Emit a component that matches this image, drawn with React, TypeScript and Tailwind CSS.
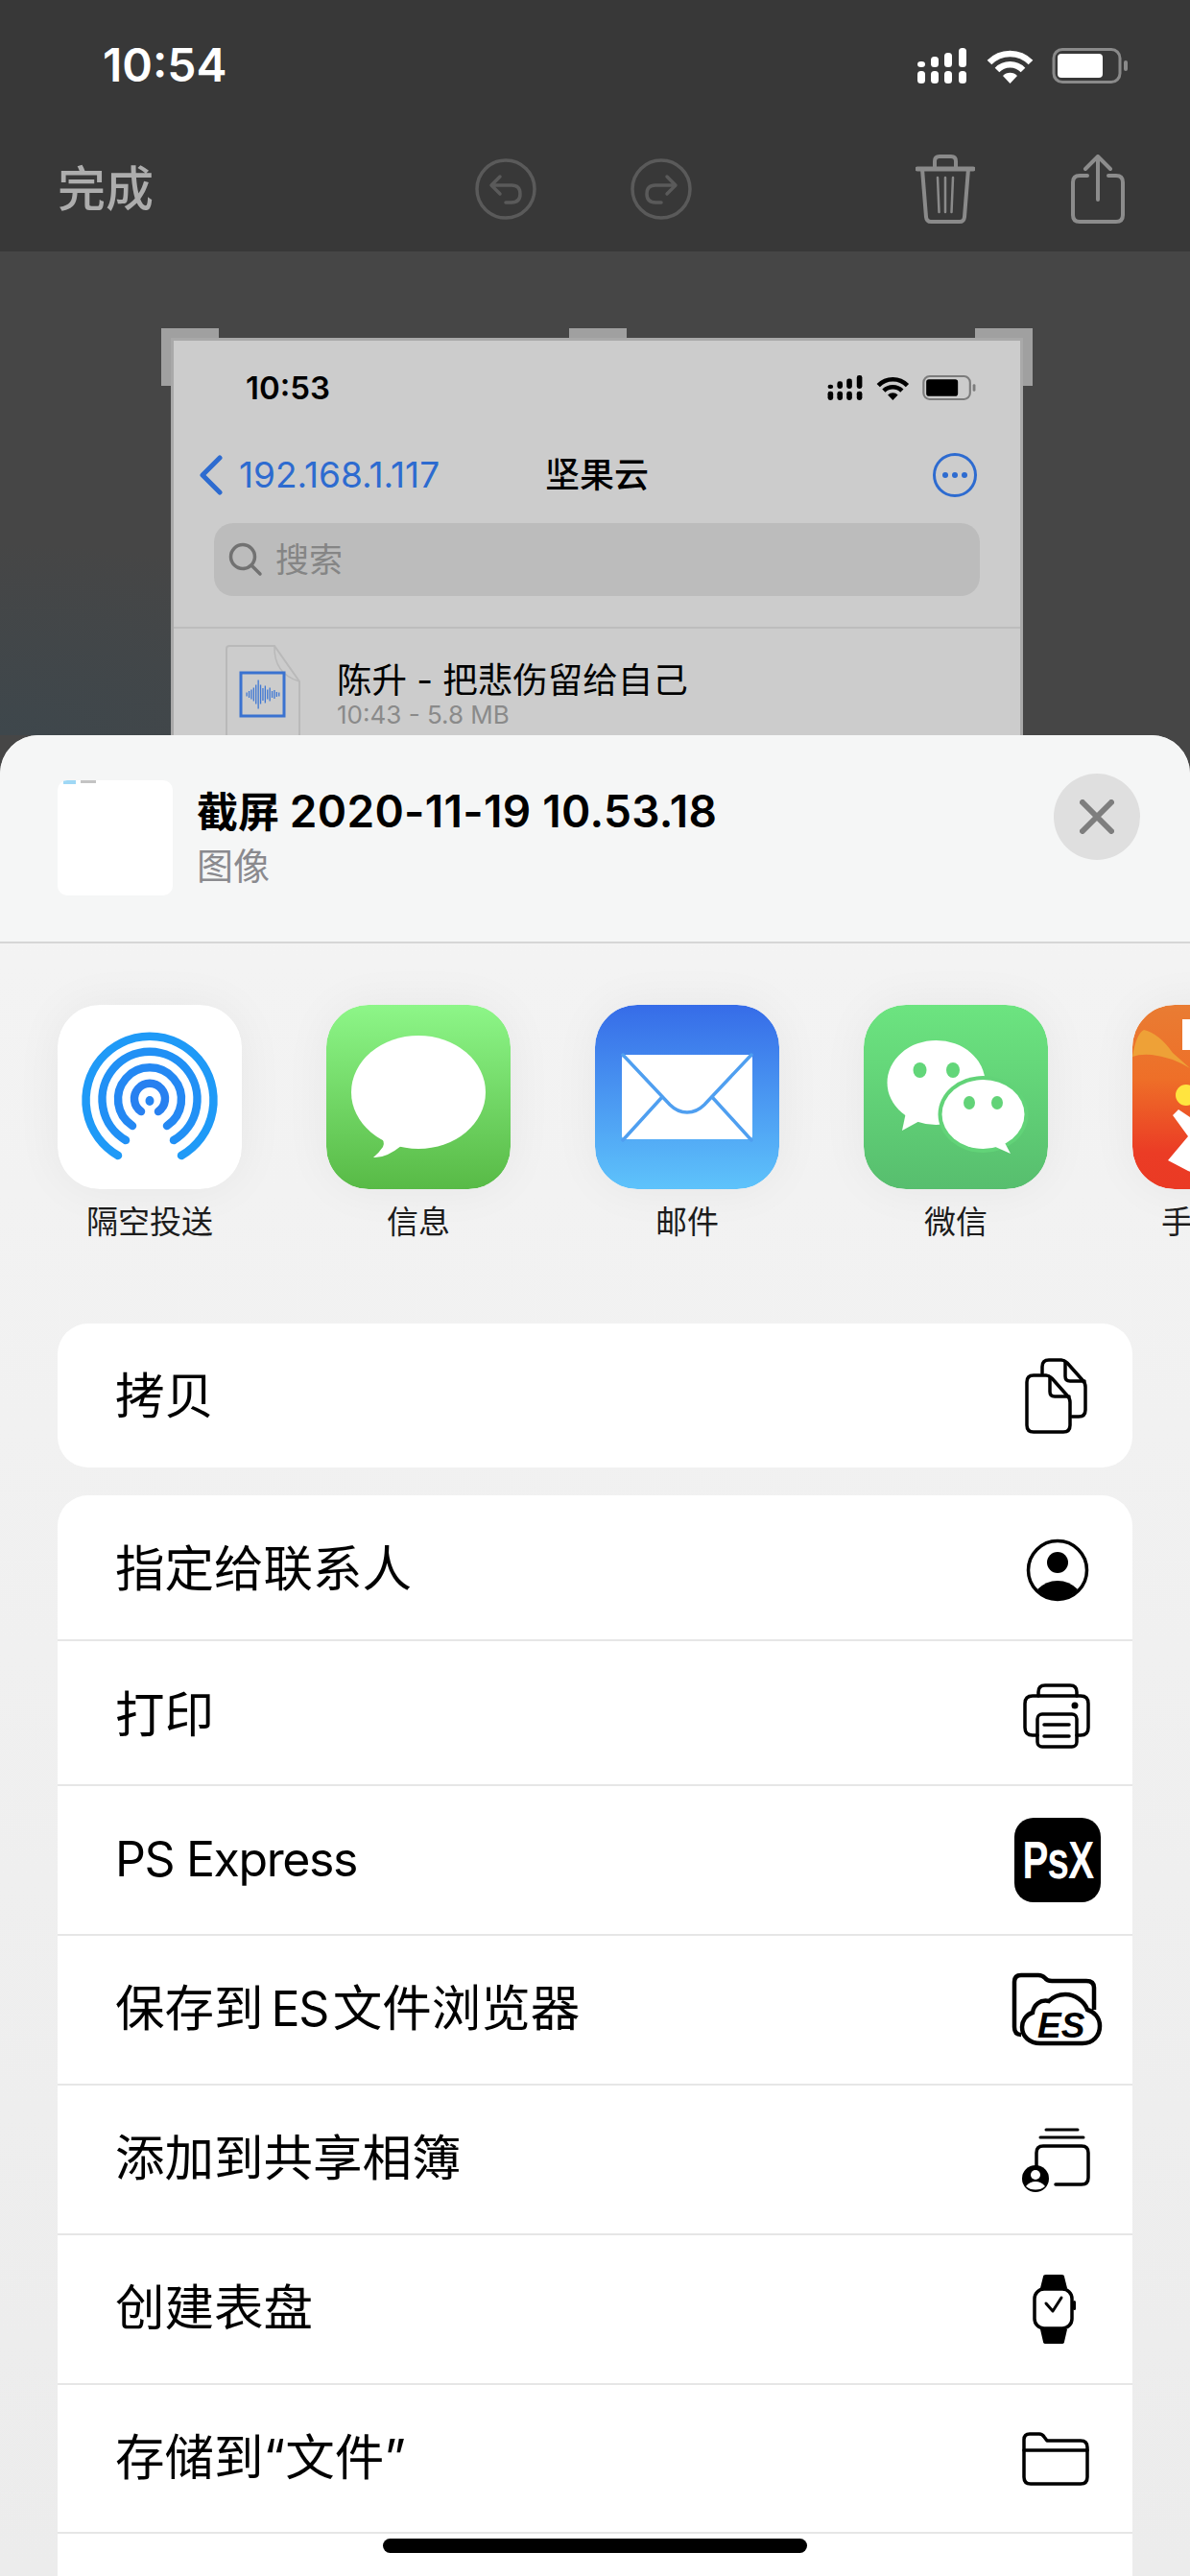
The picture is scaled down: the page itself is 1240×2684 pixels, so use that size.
import React from "react";

const FONT = "font-['Inter','Noto_Sans_CJK_SC',sans-serif]";

function StatusIcons({ color, batteryStroke, className }: { color: string; batteryStroke: string; className: string }) {
  const bars = [
    [0, 14, 6],
    [14, 9, 11],
    [28, 5, 15],
    [43, 0, 20],
  ];
  return (
    <svg viewBox="0 0 219 37" className={className} fill={color}>
      {bars.map(([x, y, h]) => (
        <g key={x}>
          <rect x={x} y={y} width="8" height={h} rx="3.5" />
          <rect x={x} y="24" width="8" height="13" rx="3.5" />
        </g>
      ))}
      <g fill="none" stroke={color} strokeWidth="6.5">
        <path d="M75 15A30 30 0 0 1 118 15" />
        <path d="M83 23A19 19 0 0 1 110 23" />
      </g>
      <path d="M96.5 37L89 29A10.5 10.5 0 0 1 104 29Z" />
      <rect x="142" y="1.5" width="69" height="34" rx="9" fill="none" stroke={batteryStroke} strokeWidth="3" />
      <rect x="146" y="6" width="47" height="25" rx="4" />
      <rect x="215" y="13" width="4" height="11" rx="2" fill={batteryStroke} />
    </svg>
  );
}

function UndoIcon({ flip }: { flip?: boolean }) {
  return (
    <svg viewBox="0 0 64 66" className={`w-[64px] h-[66px] ${flip ? "-scale-x-100" : ""}`} fill="none" stroke="#5a5a5a" strokeWidth="3.5" strokeLinecap="round" strokeLinejoin="round">
      <circle cx="32" cy="33" r="30" />
      <path d="M26 20L17 29L26 38M18 29H38Q47 29 47 38Q47 47 38 47H32" />
    </svg>
  );
}

function TrashIcon() {
  return (
    <svg viewBox="0 0 62 72" className="w-[62px] h-[72px]" fill="none" stroke="#8a8a8a" strokeWidth="4" strokeLinecap="round" strokeLinejoin="round">
      <path d="M2 15H60" strokeWidth="5" />
      <path d="M20 14V7Q20 2 25 2H37Q42 2 42 7V14" />
      <path d="M7 15L11 65Q11.500 70 16 70H46Q50.500 70 51 65L55 15" />
      <path d="M23 24L24.500 60M31 24V60M39 24L37.500 60" strokeWidth="2.500" />
    </svg>
  );
}

function ShareIcon() {
  return (
    <svg viewBox="0 0 58 72" className="w-[58px] h-[72px]" fill="none" stroke="#8c8c8c" strokeWidth="4" strokeLinecap="round" strokeLinejoin="round">
      <path d="M16 15L29 2L42 15M29 2V47" />
      <path d="M18 22H10Q3 22 3 29V63Q3 70 10 70H48Q55 70 55 63V29Q55 22 48 22H40" />
    </svg>
  );
}

function AudioFile() {
  const wave = [4, 7, 10, 14, 20, 30, 20, 13, 18, 10, 14, 7, 9, 5, 4];
  return (
    <svg viewBox="0 0 78 100" className="w-[78px] h-[100px] shrink-0" fill="none">
      <path d="M1 100V4Q1 1 4 1H51L77 38V100" stroke="#b9b9b9" strokeWidth="2" />
      <path d="M51 1Q50 30 77 38" stroke="#b9b9b9" strokeWidth="1.500" />
      <rect x="16" y="29" width="45" height="45" stroke="#3a72d0" strokeWidth="3" />
      {wave.map((h, i) => (
        <rect key={i} x={21.5 + i * 2.4} y={51.5 - h / 2} width="1.300" height={h} fill="#3f78d4" />
      ))}
    </svg>
  );
}

function ScreenshotPreview() {
  return (
    <div className="relative ml-[178px] mt-[90px] w-[888px] h-[600px] bg-[#cccccc] border-[3px] border-[#a9a9a9]">
      {/* crop handles */}
      <div className="absolute left-[-13px] top-[-13px] w-[60px] h-[10px] bg-[#a0a0a0]" />
      <div className="absolute left-[-13px] top-[-3px] w-[10px] h-[50px] bg-[#a0a0a0]" />
      <div className="absolute left-[412px] top-[-13px] w-[60px] h-[10px] bg-[#a0a0a0]" />
      <div className="absolute right-[-13px] top-[-13px] w-[60px] h-[10px] bg-[#a0a0a0]" />
      <div className="absolute right-[-13px] top-[-3px] w-[10px] h-[50px] bg-[#a0a0a0]" />

      <div className="flex items-center justify-between pl-[75px] pr-[46px] pt-[21px] h-[76px]">
        <span className="text-[33px] leading-[36px] font-semibold text-black">10:53</span>
        <StatusIcons color="#000000" batteryStroke="#7c7c7c" className="w-[155px] h-[26px]" />
      </div>

      <div className="flex items-center h-[60px] mt-[34px] pl-[26px] pr-[45px]">
        <svg viewBox="0 0 26 42" className="w-[26px] h-[42px]" fill="none" stroke="#2d6bd0" strokeWidth="5" strokeLinecap="round" strokeLinejoin="round">
          <path d="M22 3L4 21L22 39" />
        </svg>
        <span className="ml-[16px] w-[319px] text-[37px] leading-[44px] text-[#2d6bd0]">192.168.1.117</span>
        <span className="w-[108px] text-[36px] leading-[44px] font-medium text-black whitespace-nowrap">坚果云</span>
        <svg viewBox="0 0 46 46" className="ml-auto w-[46px] h-[46px]" fill="#2d6bd0">
          <circle cx="23" cy="23" r="21.500" fill="none" stroke="#2d6bd0" strokeWidth="3" />
          <circle cx="13" cy="23" r="3" />
          <circle cx="23" cy="23" r="3" />
          <circle cx="33" cy="23" r="3" />
        </svg>
      </div>

      <div className="flex items-center mx-[42px] mt-[20px] h-[76px] rounded-[20px] bg-[#bcbcbc] pl-[15px] gap-[13px]">
        <svg viewBox="0 0 36 36" className="w-[36px] h-[36px]" fill="none" stroke="#727272" strokeWidth="3.500" strokeLinecap="round">
          <circle cx="15" cy="15" r="12.500" />
          <path d="M24 24L33 33" />
        </svg>
        <span className="text-[35px] leading-[44px] text-[#858585]">搜索</span>
      </div>

      <div className="mt-[32px] h-[2px] bg-[#bdbdbd]" />

      <div className="flex pl-[54px] pt-[17px]">
        <AudioFile />
        <div className="ml-[38px] pt-[17px]">
          <div className="text-[36.5px] leading-[40px] text-black whitespace-nowrap">陈升 - 把悲伤留给自己</div>
          <div className="text-[26px] leading-[32px] text-[#8a8a8a]">10:43 - 5.8 MB</div>
        </div>
      </div>
    </div>
  );
}

function AirDropIcon() {
  return (
    <svg viewBox="0 0 192 192" className="w-[192px] h-[192px] block" fill="none">
      <rect width="192" height="192" rx="44" fill="#ffffff" />
      <g strokeWidth="8.500" strokeLinecap="round">
        <path stroke="#1f9af7" d="M63 157A66.500 66.500 0 1 1 129 157" />
        <path stroke="#2190f5" d="M71 141A49.500 49.500 0 1 1 121 141" />
        <path stroke="#2488f3" d="M78 126A33 33 0 1 1 114 126" />
        <path stroke="#2880f0" d="M87 111A16 16 0 1 1 105 111" />
      </g>
      <ellipse cx="96" cy="100" rx="4.500" ry="5" fill="#2685f2" />
    </svg>
  );
}

function MessagesIcon() {
  return (
    <svg viewBox="0 0 192 192" className="w-[192px] h-[192px] block">
      <defs>
        <linearGradient id="msg" x1="0" y1="0" x2="0" y2="1">
          <stop offset="0" stopColor="#8df688" />
          <stop offset="1" stopColor="#58ba46" />
        </linearGradient>
      </defs>
      <rect width="192" height="192" rx="44" fill="url(#msg)" />
      <ellipse cx="96" cy="91" rx="70" ry="59" fill="#ffffff" />
      <path d="M55 136Q62 142 59 148Q55 154 49 159Q62 160 78 147Z" fill="#ffffff" />
    </svg>
  );
}

function MailIcon() {
  return (
    <svg viewBox="0 0 192 192" className="w-[192px] h-[192px] block">
      <defs>
        <linearGradient id="mail" x1="0" y1="0" x2="0" y2="1">
          <stop offset="0" stopColor="#366ce8" />
          <stop offset="1" stopColor="#5ec3fb" />
        </linearGradient>
      </defs>
      <rect width="192" height="192" rx="44" fill="url(#mail)" />
      <rect x="28" y="52" width="136" height="88" rx="4" fill="#ffffff" />
      <g fill="none" stroke="#4f9ff0" strokeWidth="3.500" strokeLinecap="round">
        <path d="M29 52L78 104Q86 112 96 112Q106 112 114 104L163 52" />
        <path d="M29 141L70 96M163 141L122 96" />
      </g>
    </svg>
  );
}

function WeChatIcon() {
  return (
    <svg viewBox="0 0 192 192" className="w-[192px] h-[192px] block">
      <defs>
        <linearGradient id="wx" x1="0" y1="0" x2="0" y2="1">
          <stop offset="0" stopColor="#6ce480" />
          <stop offset="1" stopColor="#57be6e" />
        </linearGradient>
      </defs>
      <rect width="192" height="192" rx="44" fill="url(#wx)" />
      <ellipse cx="75.500" cy="81" rx="51" ry="44" fill="#ffffff" />
      <path d="M44 112L40 131L60 120Z" fill="#ffffff" />
      <ellipse cx="58.500" cy="68" rx="7" ry="8" fill="#62d679" />
      <ellipse cx="93" cy="68" rx="7" ry="8" fill="#62d679" />
      <ellipse cx="124.500" cy="114" rx="47" ry="40" fill="#62d378" />
      <ellipse cx="124.500" cy="114" rx="43" ry="36" fill="#ffffff" />
      <path d="M145 140L153 155L135 147Z" fill="#ffffff" />
      <ellipse cx="110" cy="102" rx="6" ry="7" fill="#62d378" />
      <ellipse cx="139" cy="102" rx="6" ry="7" fill="#62d378" />
    </svg>
  );
}

function OrangeAppIcon() {
  return (
    <svg viewBox="0 0 192 192" className="w-[192px] h-[192px] block">
      <defs>
        <linearGradient id="hand" x1="0" y1="0" x2="0" y2="1">
          <stop offset="0" stopColor="#e97c33" />
          <stop offset="0.4" stopColor="#ee6f28" />
          <stop offset="0.8" stopColor="#eb3c25" />
          <stop offset="1" stopColor="#ea3a24" />
        </linearGradient>
      </defs>
      <rect width="192" height="192" rx="44" fill="url(#hand)" />
      <path d="M0 54Q4 30 12 26Q28 30 42 50L60 66Q40 54 20 52Q8 51 0 54Z" fill="#eea137" />
      <rect x="52" y="15" width="40" height="32" fill="#ffffff" />
      <circle cx="56" cy="94" r="11" fill="#ffe43f" />
      <path d="M42 115L48 109L80 130V180L58 173L37 162L58 137Z" fill="#ffffff" />
    </svg>
  );
}

const apps = [
  { label: "隔空投送", icon: <AirDropIcon /> },
  { label: "信息", icon: <MessagesIcon /> },
  { label: "邮件", icon: <MailIcon /> },
  { label: "微信", icon: <WeChatIcon /> },
  { label: "手机淘宝", icon: <OrangeAppIcon /> },
];

const line = { fill: "none", stroke: "#000000", strokeWidth: 3.5, strokeLinecap: "round", strokeLinejoin: "round" } as const;

function CopyIcon() {
  return (
    <g {...line}>
      <path d="M34 27V20Q34 13 41 13H54Q57 13 60 16L76 34Q79 37 79 41V65Q79 72 72 72H65" />
      <path d="M58 15V30Q58 35 63 35H78" />
      <path d="M25 29H38Q41 29 44 32L60 50Q63 53 63 57V81Q63 88 56 88H25Q18 88 18 81V36Q18 29 25 29Z" />
      <path d="M42 31V46Q42 51 47 51H62" />
    </g>
  );
}

function PersonIcon() {
  return (
    <g>
      <circle cx="50" cy="50" r="30.500" {...line} />
      <circle cx="50" cy="42" r="11" fill="#000000" />
      <path d="M29 70Q38 61 50 61Q62 61 71 70Q62 80 50 80Q38 80 29 70Z" fill="#000000" />
    </g>
  );
}

function PrinterIcon() {
  return (
    <g {...line}>
      <path d="M30 29V25Q30 18 37 18H63Q70 18 70 25V29" />
      <path d="M29 70H24Q16 70 16 62V37Q16 29 24 29H74Q82 29 82 37V62Q82 70 74 70H70" />
      <rect x="29" y="48" width="41" height="34" rx="5" />
      <path d="M36 59H62M36 71H62" />
      <circle cx="68" cy="39" r="3.500" fill="#000000" stroke="none" />
    </g>
  );
}

function EsIcon() {
  return (
    <g>
      <path d="M12 76Q5 76 5 68V21Q5 14 12 14H30Q34 14 37 17Q39 20 44 20H80Q88 20 88 27V50" fill="none" stroke="#000000" strokeWidth="4.500" />
      <path d="M32 85H76C87 85 94 77 94 67C94 58 88 52 81 50C78 41 68 34 58 34C50 34 44 38 41 41C32 39 25 45 24 53C17 55 13 62 13 68C13 78 21 85 32 85Z" fill="#ffffff" stroke="#000000" strokeWidth="4.500" />
      <text x="29" y="79" fontSize="37" fontWeight="700" fontStyle="italic" fontFamily="'Liberation Sans',sans-serif" fill="#000000">ES</text>
    </g>
  );
}

function SharedAlbumIcon() {
  return (
    <g>
      <g {...line}>
        <path d="M38 19H71" strokeWidth="3" />
        <path d="M32 27H77" strokeWidth="3" />
        <path d="M28 59V43Q28 36 35 36H75Q82 36 82 43V69Q82 76 75 76H48" />
      </g>
      <circle cx="27" cy="70" r="14" fill="#000000" />
      <circle cx="27" cy="66" r="5" fill="#ffffff" />
      <path d="M17 78Q21 73 27 73Q33 73 37 78Q33 81.500 27 81.500Q21 81.500 17 78Z" fill="#ffffff" />
    </g>
  );
}

function WatchIcon() {
  return (
    <g>
      <rect x="26" y="29" width="39" height="41" rx="10" {...line} />
      <path d="M32 28L35 16Q35 14 38 14H54Q57 14 57 16L60 28Z" fill="#000000" />
      <path d="M32 71L35 84Q35 86 38 86H54Q57 86 57 84L60 71Z" fill="#000000" />
      <rect x="66" y="41" width="3" height="10" rx="1.500" fill="#000000" />
      <path d="M38 44L45 52L54 38" {...line} strokeWidth="3" />
    </g>
  );
}

function FolderIcon() {
  return (
    <g {...line}>
      <path d="M15 30Q15 24 21 24H31Q34 24 36 27L39 31H74Q81 31 81 38V69Q81 76 74 76H22Q15 76 15 69Z" />
      <path d="M15 41H81" />
    </g>
  );
}

function RowIcon({ children }: { children: React.ReactNode }) {
  return (
    <svg viewBox="0 0 100 100" className="w-[100px] h-[100px] shrink-0 overflow-visible">
      {children}
    </svg>
  );
}

function PsxBadge() {
  return (
    <div className="w-[100px] h-[100px] shrink-0 flex items-center justify-center">
      <div className="w-[90px] h-[88px] rounded-[20px] bg-black flex items-center justify-center overflow-hidden">
        <span className="font-['Liberation_Sans',sans-serif] font-bold text-[56px] leading-[56px] text-white scale-x-[0.72] tracking-[-1px]">PsX</span>
      </div>
    </div>
  );
}

const rows: { label: React.ReactNode; key: string; icon: React.ReactNode; h: string }[] = [
  { key: "contact", label: "指定给联系人", icon: <RowIcon><PersonIcon /></RowIcon>, h: "h-[150px] pt-[6px]" },
  { key: "print", label: "打印", icon: <RowIcon><PrinterIcon /></RowIcon>, h: "h-[151px] pt-[6px] border-t-2 border-[#e6e6e6]" },
  { key: "psx", label: <span className="text-[50px] tracking-[-1.4px]">PS Express</span>, icon: <PsxBadge />, h: "h-[156px] border-t-2 border-[#e6e6e6]" },
  {
    key: "es",
    label: (
      <>
        保存到<span className="text-[50px] tracking-[-1.4px] ml-[8px] mr-[5px]">ES</span>文件浏览器
      </>
    ),
    icon: <RowIcon><EsIcon /></RowIcon>,
    h: "h-[156px] border-t-2 border-[#e6e6e6]",
  },
  { key: "album", label: "添加到共享相簿", icon: <RowIcon><SharedAlbumIcon /></RowIcon>, h: "h-[156px] border-t-2 border-[#e6e6e6]" },
  { key: "watch", label: "创建表盘", icon: <RowIcon><WatchIcon /></RowIcon>, h: "h-[156px] border-t-2 border-[#e6e6e6]" },
  { key: "files", label: "存储到“文件”", icon: <RowIcon><FolderIcon /></RowIcon>, h: "h-[155px] border-t-2 border-[#e6e6e6]" },
];

export default function App() {
  return (
    <div className={`relative w-[1240px] h-[2684px] overflow-hidden bg-[#464646] ${FONT}`}>
      {/* top bar */}
      <div className="h-[262px] bg-[#383838]">
        <div className="flex items-center justify-between h-[136px] pl-[107px] pr-[65px]">
          <span className="text-[48px] leading-[56px] font-semibold text-white">10:54</span>
          <StatusIcons color="#ffffff" batteryStroke="#8a8a8a" className="w-[219px] h-[37px]" />
        </div>
        <div className="flex items-center h-[122px] pl-[60px] pb-[1px]">
          <span className="w-[100px] text-[50px] leading-[60px] font-medium text-[#adadad] whitespace-nowrap">完成</span>
          <div className="ml-[335px]"><UndoIcon /></div>
          <div className="ml-[98px]"><UndoIcon flip /></div>
          <div className="ml-[233px]"><TrashIcon /></div>
          <div className="ml-[99px]"><ShareIcon /></div>
        </div>
      </div>

      {/* screenshot being edited */}
      <div className="h-[504px] overflow-hidden bg-[radial-gradient(ellipse_at_0%_100%,#3e474c_0%,#464646_28%)]">
        <ScreenshotPreview />
      </div>

      {/* share sheet */}
      <div className="absolute left-0 right-0 top-[766px] bottom-0 rounded-t-[40px] bg-gradient-to-b from-[#f4f4f4] to-[#ececec] overflow-hidden">
        <div className="flex h-[217px] border-b-2 border-[#d6d6d6] bg-[#f5f6f6] pl-[60px] pr-[52px] pt-[47px]">
          <div className="flex gap-[3px] w-[120px] h-[120px] rounded-[10px] bg-white overflow-hidden pl-[6px]">
            <div className="w-[13px] h-[4px] bg-[#9fd8f5]" />
            <div className="ml-[2px] w-[16px] h-[3px] bg-[#c4c4c4]" />
          </div>
          <div className="ml-[25px] pt-[6px]">
            <div className="text-[43px] leading-[52px] font-semibold text-black whitespace-nowrap">
              截屏 <span className="text-[46px] tracking-[0.3px]">2020-11-19 10.53.18</span>
            </div>
            <div className="mt-[7px] text-[38px] leading-[46px] text-[#8a8a8e]">图像</div>
          </div>
          <div className="ml-auto mt-[-7px] w-[90px] h-[90px] rounded-full bg-[#dfdfdf] flex items-center justify-center">
            <svg viewBox="0 0 36 36" className="w-[36px] h-[36px]" fill="none" stroke="#7e7e7e" strokeWidth="6" strokeLinecap="round">
              <path d="M3 3L33 33M33 3L3 33" />
            </svg>
          </div>
        </div>

        <div className="flex gap-[88px] pl-[60px] pt-[64px] overflow-hidden">
          {apps.map((app) => (
            <div key={app.label} className="w-[192px] shrink-0 flex flex-col items-center">
              <div className="rounded-[44px] overflow-hidden shadow-[0_0_50px_rgba(0,0,0,0.05)]">{app.icon}</div>
              <div className="mt-[14px] text-[33px] leading-[40px] text-[#1c1c1c] whitespace-nowrap">{app.label}</div>
            </div>
          ))}
        </div>

        <div className="mx-[60px] mt-[86px] h-[150px] rounded-[32px] bg-white flex items-center justify-between pl-[60px] pr-[28px]">
          <span className="text-[51.5px] leading-[60px] text-black">拷贝</span>
          <RowIcon><CopyIcon /></RowIcon>
        </div>

        <div className="mx-[60px] mt-[29px] h-[1200px] rounded-t-[32px] bg-white">
          {rows.map((row) => (
            <div key={row.key} className={`flex items-center justify-between pl-[60px] pr-[28px] ${row.h}`}>
              <span className="text-[51.5px] leading-[60px] pb-[4px] text-black whitespace-nowrap">{row.label}</span>
              {row.icon}
            </div>
          ))}
          <div className="border-t-2 border-[#e6e6e6]" />
        </div>
      </div>

      {/* home indicator */}
      <div className="absolute left-[399px] top-[2645px] w-[442px] h-[15px] rounded-full bg-black" />
    </div>
  );
}
